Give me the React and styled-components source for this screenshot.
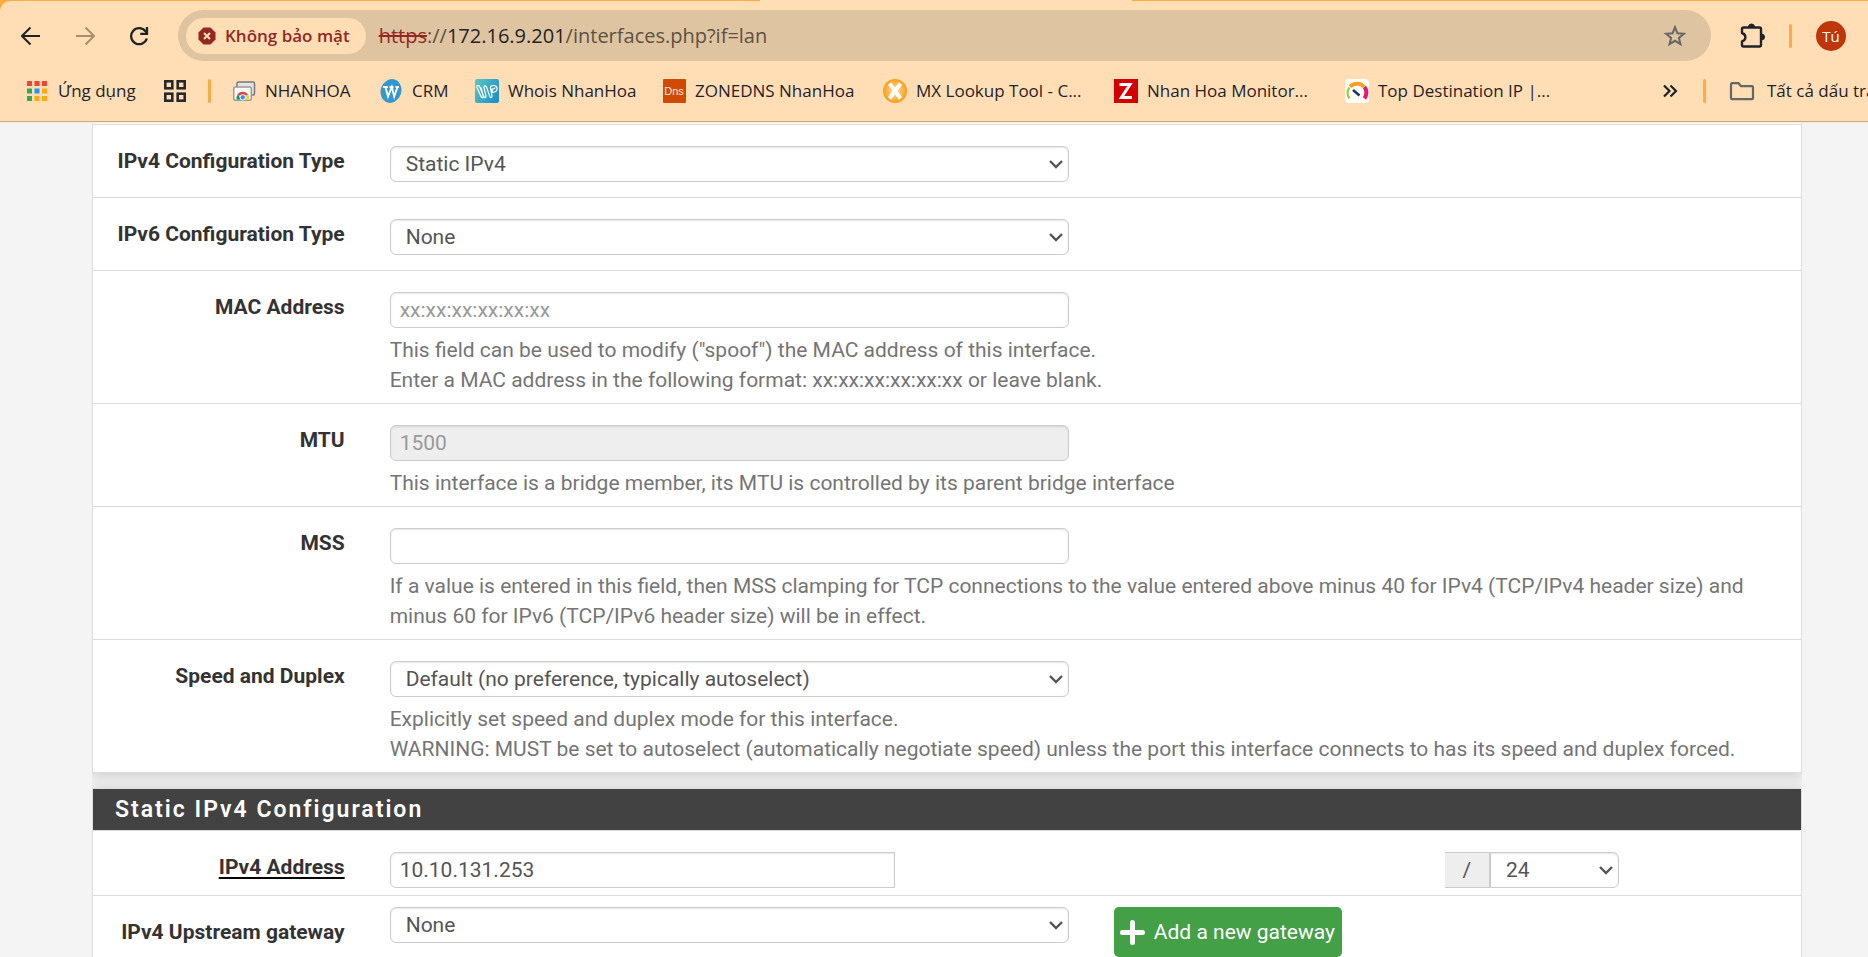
import React from "react";
import styled, { createGlobalStyle } from "styled-components";

const GlobalStyle = createGlobalStyle`
  * { box-sizing: border-box; }
  body {
    margin: 0;
    background: #f4f4f4;
    font-family: Roboto, "Liberation Sans", sans-serif;
    font-size: 21px;
    line-height: 30px;
    color: #333;
  }
`;

const Window = styled.div`
  display: flex;
  flex-direction: column;
  height: 100vh;
  overflow: hidden;
`;

/* ---------- browser frame ---------- */

const BrowserFrame = styled.header`
  flex: none;
  background: #ffab40;
  border-bottom: 1px solid #ffe8cc;
  font-family: "Open Sans", "Noto Sans", sans-serif;
  color: #1f2328;
`;

const TabStrip = styled.div`
  display: grid;
  grid-template-columns: 760fr 372fr 736fr;
  height: 1px;
`;

const ActiveTab = styled.div`
  grid-column: 2;
  height: 1px;
  background: #ffdeb6;
`;

const FrameBody = styled.div`
  height: 121px;
  background: #ffdeb6;
  border-top-left-radius: 10px;
  border-bottom: 1px solid #ccae8b;
`;

const Toolbar = styled.div`
  display: flex;
  align-items: center;
  height: 69px;
  padding: 0 22px 0 18px;
`;

const IconButton = styled.button`
  display: flex;
  align-items: center;
  justify-content: center;
  flex: none;
  width: 26px;
  height: 26px;
  padding: 0;
  border: 0;
  background: none;
  color: ${(p) => (p.disabled ? "#a8906f" : "#1f2328")};
`;

const NavButtons = styled.nav`
  display: flex;
  gap: 28px;
  margin-right: 26px;
`;

const Omnibox = styled.div`
  display: flex;
  align-items: center;
  flex: 1;
  height: 51px;
  padding: 0 23px 0 8px;
  border-radius: 26px;
  background: #dfc4a1;
`;

const SecurityChip = styled.button`
  display: flex;
  align-items: center;
  gap: 9px;
  height: 36px;
  padding: 0 16px 0 12px;
  border: 0;
  border-radius: 18px;
  background: #ffdeb6;
  color: #942822;
  font: 600 17px "Open Sans", "Noto Sans", sans-serif;
  white-space: nowrap;
`;

const Address = styled.div`
  flex: 1;
  margin-left: 13px;
  font-size: 20px;
  white-space: nowrap;
  color: #5d5143;

  s { color: #942822; }
  b { font-weight: 400; color: #1f2328; }
`;

const FrameDivider = styled.span`
  flex: none;
  width: 3px;
  height: 24px;
  border-radius: 2px;
  background: #ffab40;
`;

const ToolbarEnd = styled.div`
  display: flex;
  align-items: center;
  gap: 24px;
  margin-left: 28px;
`;

const Avatar = styled.button`
  width: 30px;
  height: 30px;
  padding: 0;
  border: 0;
  border-radius: 50%;
  background: #bf360c;
  color: #fff;
  font: 400 15px "Open Sans", "Noto Sans", sans-serif;
`;

const BookmarkBar = styled.nav`
  display: flex;
  align-items: center;
  height: 42px;
  padding-left: 25px;
  overflow: hidden;
`;

const Bookmark = styled.a`
  display: flex;
  align-items: center;
  flex: none;
  gap: 9px;
  width: ${(p) => p.$width}px;
  color: inherit;
  font-size: 17px;
  text-decoration: none;
  white-space: nowrap;
`;

const BookmarkGroup = styled.div`
  display: flex;
  align-items: center;
  flex: 1;
`;

const BookmarkEnd = styled.div`
  display: flex;
  align-items: center;
  flex: none;
  width: 211px;
  gap: 20px;
`;

const FolderLink = styled(Bookmark)`
  gap: 12px;
  padding-left: 3px;
`;

/* ---------- settings page ---------- */

const Main = styled.main`
  flex: 1;
  min-height: 0;
  margin: 0 66px 0 92px;
  overflow: hidden;
  background: #f0f0f0;
`;

const Panel = styled.section`
  margin-bottom: 15px;
  padding-top: ${(p) => (p.$continued ? 1 : 0)}px;
  border: 1px solid #ddd;
  border-top-width: ${(p) => (p.$continued ? 0 : 1)}px;
  background: #fff;
  box-shadow: 0 2px 12px rgba(0, 0, 0, 0.16);
`;

const PanelTitle = styled.h2`
  margin: 0;
  padding: 0 22px;
  background: #424242;
  color: #fff;
  font-size: 23px;
  font-weight: 600;
  line-height: 41px;
  letter-spacing: 2px;
`;

const FormRow = styled.div`
  border-top: 1px solid #ddd;
`;

const Columns = styled.div`
  display: grid;
  grid-template-columns: repeat(12, minmax(0, 1fr));
  margin: 0 -15px;
  padding-bottom: ${(p) => (p.$compact ? 0 : 8)}px;
`;

const LabelCell = styled.div`
  grid-column: span 2;
  padding: 21px 23px 0 0;
  text-align: right;
  white-space: nowrap;
`;

const Label = styled.label`
  font-weight: 700;
  color: #333;
  text-decoration: ${(p) => (p.$required ? "underline #000 2px" : "none")};
  text-underline-offset: 3px;
`;

const FieldCell = styled.div`
  grid-column: span ${(p) => p.$span || 5};
  padding: ${(p) => (p.$tight ? 11 : 21)}px 23px 7px 22px;
`;

const HelpCell = styled.p`
  grid-column: 3 / span 10;
  margin: 0;
  padding: 0 22px;
  color: #757575;
`;

const TextInput = styled.input`
  display: block;
  width: 100%;
  height: 36px;
  padding: 0 9px;
  border: 1px solid #ccc;
  border-radius: ${(p) => (p.$joined ? "6px 0 0 6px" : "6px")};
  background: #fff;
  box-shadow: inset 0 1px 2px rgba(0, 0, 0, 0.1);
  color: #555;
  font: 400 21px Roboto, "Liberation Sans", sans-serif;

  &::placeholder { color: #999; opacity: 1; }
  &:disabled { background: #eee; color: #999; }
`;

const SelectBox = styled.div`
  position: relative;

  svg {
    position: absolute;
    right: 6px;
    top: 14px;
    pointer-events: none;
  }
`;

const SelectInput = styled.select`
  display: block;
  appearance: none;
  width: 100%;
  height: 36px;
  padding: 0 15px;
  border: 1px solid #ccc;
  border-radius: ${(p) => (p.$joined ? "0 6px 6px 0" : "6px")};
  background: #fff;
  box-shadow: inset 0 1px 2px rgba(0, 0, 0, 0.1);
  color: #555;
  font: 400 21px Roboto, "Liberation Sans", sans-serif;
`;

const AddressGroup = styled.div`
  display: grid;
  grid-template-columns: 505fr 550fr 45px 129px 174fr;
`;

const Addon = styled.span`
  grid-column: 3;
  height: 36px;
  border: 1px solid #ccc;
  border-left: 0;
  background: #eee;
  color: #555;
  line-height: 34px;
  text-align: center;
`;

const AddButton = styled.button`
  display: flex;
  align-items: center;
  gap: 9px;
  height: 50px;
  padding: 0 7px 0 6px;
  border: 0;
  border-radius: 5px;
  background: #43a047;
  color: #fff;
  font: 400 21px Roboto, "Liberation Sans", sans-serif;
  white-space: nowrap;
`;

/* ---------- icons ---------- */

const Chevron = () => (
  <svg width="14" height="9" viewBox="0 0 14 9" fill="none" stroke="#555" strokeWidth="2.4">
    <path d="M1 1l6 6 6-6" />
  </svg>
);

const ArrowIcon = ({ flip }) => (
  <svg width="20" height="20" viewBox="0 0 20 20" fill="none" stroke="currentColor" strokeWidth="2">
    <path d={flip ? "M1 10h17M10.500 1.500l8.500 8.500-8.500 8.500" : "M19 10H2M9.500 1.500L1 10l8.500 8.500"} />
  </svg>
);

const ReloadIcon = () => (
  <svg width="20" height="20" viewBox="0 0 20 20" fill="none" stroke="currentColor" strokeWidth="2.300">
    <path d="M17.800 12.500A8 8 0 1 1 16.500 5.300L18 7" />
    <path d="M18 1v6.800h-6.800" />
  </svg>
);

const DangerIcon = () => (
  <svg width="18" height="18" viewBox="0 0 18 18">
    <path d="M5.500 0.500h7l5 5v7l-5 5h-7l-5-5v-7z" fill="#942822" />
    <path d="M6 6l6 6M12 6l-6 6" stroke="#ffdeb6" strokeWidth="2" />
  </svg>
);

const StarIcon = () => (
  <svg width="24" height="24" viewBox="0 0 24 24" fill="none" stroke="#676767" strokeWidth="2">
    <path d="M12 3.200l2.400 6 6.500.5-5 4.200 1.600 6.300L12 16.800l-5.500 3.400 1.600-6.300-5-4.200 6.500-.5z" />
  </svg>
);

const PuzzleIcon = () => (
  <svg width="26" height="26" viewBox="0 0 26 26">
    <path
      d="M4.500 4.500h16a1.500 1.500 0 0 1 1.500 1.500v16a1.500 1.500 0 0 1-1.500 1.500h-16a1.500 1.500 0 0 1-1.500-1.500v-3.500c4.500-1.500 4.500-7 0-8.500V6a1.500 1.500 0 0 1 1.500-1.500z"
      fill="none" stroke="#1f2328" strokeWidth="2.400" strokeLinejoin="round"
    />
    <path d="M9.500 4a3 3 0 0 1 6 0zM22.500 11a3 3 0 0 1 0 6z" fill="#1f2328" stroke="#1f2328" />
  </svg>
);

const appColours = ["#f44336", "#f44336", "#f44336", "#34a853", "#2196f3", "#ffa90a", "#34a853", "#ffa90a", "#ffa90a"];

const AppsIcon = () => (
  <svg width="24" height="24" viewBox="0 0 24 24">
    {appColours.map((colour, i) => (
      <rect key={i} x={2 + (i % 3) * 7.500} y={2 + Math.floor(i / 3) * 7.500} width="5" height="5" fill={colour} />
    ))}
  </svg>
);

const GridIcon = () => (
  <svg width="24" height="24" viewBox="0 0 24 24" fill="none" stroke="#26282b" strokeWidth="2.600">
    <rect x="2.300" y="2.300" width="7" height="7" />
    <rect x="14.700" y="2.300" width="7" height="7" />
    <rect x="2.300" y="14.700" width="7" height="7" />
    <rect x="14.700" y="14.700" width="7" height="7" />
  </svg>
);

const WindowsIcon = () => (
  <svg width="24" height="24" viewBox="0 0 24 24">
    <rect x="5" y="3" width="17.500" height="13" rx="1.500" fill="#e4e4e4" stroke="#777" strokeWidth="1.500" />
    <rect x="1.800" y="8" width="17.500" height="13.200" rx="1.500" fill="#fff" stroke="#999" strokeWidth="1.500" />
    <path d="M4.500 20.500a6.200 6.200 0 0 1 1.200-5l4.300 5z" fill="#0f9d58" />
    <path d="M5.200 16a6.200 6.200 0 0 1 11 0l-5.500 1.500z" fill="#db4437" />
    <path d="M11 20.500l1-4.500h4.500a6.200 6.200 0 0 1 .5 4.500z" fill="#ffcd40" />
    <circle cx="10.700" cy="18.300" r="2.700" fill="#4285f4" stroke="#fff" />
  </svg>
);

const CrmIcon = () => (
  <svg width="24" height="24" viewBox="0 0 24 24">
    <ellipse cx="12" cy="12" rx="10.300" ry="12" transform="rotate(18 12 12)" fill="#3398d0" />
    <path
      d="M4 8h5M10.500 8h4M16.500 8h3.500M6.500 8l2.500 9.500L12.800 8l2.400 9.500L18.500 8"
      fill="none" stroke="#fff" strokeWidth="1.900"
    />
  </svg>
);

const WhoisIcon = () => (
  <svg width="24" height="24" viewBox="0 0 24 24">
    <defs>
      <linearGradient id="whois" x1="0" y1="0" x2="1" y2="0.600">
        <stop offset="0" stopColor="#5cc8c0" />
        <stop offset="1" stopColor="#1f93cc" />
      </linearGradient>
    </defs>
    <rect width="24" height="24" rx="2" fill="url(#whois)" />
    <path
      d="M1.500 7.500l4.500 10c.8 1.800 2.600 1.300 2.200-.5L6 8.500M1.500 7.500C2 6 4 6 4.600 7.500l4.200 10c.8 1.800 2.600 1.300 2.200-.5L9 8.500c-.3-2 1.800-2.200 2.500-.5l3.300 9.500c.8 1.800 2.500 1 2.200-.8L15.500 9c-.3-1.800 1-2.500 3-2.500 5 0 5 6.500-1 7l-.5-3.500c1.500 0 3-.3 3-1.500"
      fill="none" stroke="#fff" strokeWidth="1.200"
    />
  </svg>
);

const TileText = styled.text`
  fill: #ffe9dd;
  font-family: "Liberation Sans", sans-serif;
  font-size: 11px;
  text-anchor: middle;
`;

const DnsIcon = () => (
  <svg width="24" height="24" viewBox="0 0 24 24">
    <rect x="1" width="23" height="24" rx="1" fill="#d04a02" />
    <TileText x="12" y="16">Dns</TileText>
  </svg>
);

const MxIcon = () => (
  <svg width="24" height="24" viewBox="0 0 24 24">
    <defs>
      <radialGradient id="mx">
        <stop offset="0" stopColor="#ffe0a8" />
        <stop offset="1" stopColor="#fb9d14" />
      </radialGradient>
    </defs>
    <circle cx="12" cy="12" r="12" fill="url(#mx)" />
    <path d="M6.500 4.500l11 15M17.500 4.500l-11 15" stroke="#fff" strokeWidth="4" />
  </svg>
);

const ZabbixIcon = () => (
  <svg width="24" height="24" viewBox="0 0 24 24">
    <rect width="24" height="24" fill="#d40000" />
    <path d="M5.500 5.500h10.500L7.500 18.500h10.500" fill="none" stroke="#fff" strokeWidth="3" />
  </svg>
);

const GaugeIcon = () => (
  <svg width="24" height="24" viewBox="0 0 24 24" fill="none">
    <rect width="24" height="24" rx="4" fill="#fff" />
    <path d="M4.500 19.500C2 16 2 11.500 4.500 8.500" stroke="#a4d037" strokeWidth="2.400" />
    <path d="M5 7.800c4-4.500 11-4 14 .2" stroke="#ff9d1c" strokeWidth="3.600" />
    <path d="M19.500 8c2.500 3 2.500 8 0 11.500" stroke="#f5106e" strokeWidth="4" />
    <path d="M8 11l6.500 5.500" stroke="#1d3a5f" strokeWidth="2.600" />
  </svg>
);

const MoreIcon = () => (
  <svg width="16" height="14" viewBox="0 0 16 14" fill="none" stroke="#1f2328" strokeWidth="2.200">
    <path d="M2 1.500L7.500 7 2 12.500M8.500 1.500L14 7l-5.500 5.500" />
  </svg>
);

const FolderIcon = () => (
  <svg width="26" height="20" viewBox="0 0 26 20" fill="none" stroke="#666" strokeWidth="2.200">
    <path d="M3 2.200h6.500l2.500 3h11a1 1 0 0 1 1 1v11a1 1 0 0 1-1 1H3a1 1 0 0 1-1-1v-14a1 1 0 0 1 1-1z" />
  </svg>
);

const PlusIcon = () => (
  <svg width="25" height="25" viewBox="0 0 25 25">
    <path d="M12.500 2.500v20M2.500 12.500h20" stroke="#fff" strokeWidth="5" strokeLinecap="round" />
  </svg>
);

/* ---------- composition ---------- */

const bookmarks = [
  { title: "NHANHOA", icon: <WindowsIcon />, width: 147 },
  { title: "CRM", icon: <CrmIcon />, width: 96 },
  { title: "Whois NhanHoa", icon: <WhoisIcon />, width: 187 },
  { title: "ZONEDNS NhanHoa", icon: <DnsIcon />, width: 221 },
  { title: "MX Lookup Tool - C...", icon: <MxIcon />, width: 231 },
  { title: "Nhan Hoa Monitor...", icon: <ZabbixIcon />, width: 231 },
  { title: "Top Destination IP |...", icon: <GaugeIcon />, width: 220 },
];

function Browser() {
  return (
    <BrowserFrame>
      <TabStrip><ActiveTab /></TabStrip>
      <FrameBody>
        <Toolbar>
          <NavButtons>
            <IconButton aria-label="Back"><ArrowIcon /></IconButton>
            <IconButton aria-label="Forward" disabled><ArrowIcon flip /></IconButton>
            <IconButton aria-label="Reload"><ReloadIcon /></IconButton>
          </NavButtons>
          <Omnibox>
            <SecurityChip><DangerIcon />Không bảo mật</SecurityChip>
            <Address><s>https</s>://<b>172.16.9.201</b>/interfaces.php?if=lan</Address>
            <IconButton aria-label="Bookmark this page"><StarIcon /></IconButton>
          </Omnibox>
          <ToolbarEnd>
            <IconButton aria-label="Extensions"><PuzzleIcon /></IconButton>
            <FrameDivider />
            <Avatar>Tú</Avatar>
          </ToolbarEnd>
        </Toolbar>
        <BookmarkBar>
          <BookmarkGroup>
            <Bookmark href="#" $width={138}><AppsIcon />Ứng dụng</Bookmark>
            <Bookmark href="#" $width={45} aria-label="Tab groups"><GridIcon /></Bookmark>
            <Bookmark as="span" $width={24}><FrameDivider /></Bookmark>
            {bookmarks.map((b) => (
              <Bookmark key={b.title} href="#" $width={b.width}>{b.icon}{b.title}</Bookmark>
            ))}
          </BookmarkGroup>
          <BookmarkEnd>
            <IconButton aria-label="More bookmarks"><MoreIcon /></IconButton>
            <FrameDivider />
            <FolderLink href="#" $width={220}><FolderIcon />Tất cả dấu trang</FolderLink>
          </BookmarkEnd>
        </BookmarkBar>
      </FrameBody>
    </BrowserFrame>
  );
}

function Select({ id, value, joined, label }) {
  return (
    <SelectBox>
      <SelectInput id={id} $joined={joined} aria-label={label} defaultValue={value}>
        <option>{value}</option>
      </SelectInput>
      <Chevron />
    </SelectBox>
  );
}

function Field({ id, label, help, children }) {
  return (
    <FormRow>
      <Columns>
        <LabelCell><Label htmlFor={id}>{label}</Label></LabelCell>
        <FieldCell>{children}</FieldCell>
        {help && <HelpCell>{help}</HelpCell>}
      </Columns>
    </FormRow>
  );
}

export default function App() {
  return (
    <Window>
      <GlobalStyle />
      <Browser />
      <Main>
        <Panel $continued>
          <Field id="type4" label="IPv4 Configuration Type">
            <Select id="type4" value="Static IPv4" />
          </Field>
          <Field id="type6" label="IPv6 Configuration Type">
            <Select id="type6" value="None" />
          </Field>
          <Field
            id="mac"
            label="MAC Address"
            help={<>This field can be used to modify ("spoof") the MAC address of this interface.<br />Enter a MAC address in the following format: xx:xx:xx:xx:xx:xx or leave blank.</>}
          >
            <TextInput id="mac" placeholder="xx:xx:xx:xx:xx:xx" />
          </Field>
          <Field
            id="mtu"
            label="MTU"
            help="This interface is a bridge member, its MTU is controlled by its parent bridge interface"
          >
            <TextInput id="mtu" placeholder="1500" disabled />
          </Field>
          <Field
            id="mss"
            label="MSS"
            help="If a value is entered in this field, then MSS clamping for TCP connections to the value entered above minus 40 for IPv4 (TCP/IPv4 header size) and minus 60 for IPv6 (TCP/IPv6 header size) will be in effect."
          >
            <TextInput id="mss" />
          </Field>
          <Field
            id="media"
            label="Speed and Duplex"
            help={<>Explicitly set speed and duplex mode for this interface.<br />WARNING: MUST be set to autoselect (automatically negotiate speed) unless the port this interface connects to has its speed and duplex forced.</>}
          >
            <Select id="media" value="Default (no preference, typically autoselect)" />
          </Field>
        </Panel>

        <Panel>
          <PanelTitle>Static IPv4 Configuration</PanelTitle>
          <FormRow>
            <Columns $compact>
              <LabelCell><Label htmlFor="ipaddr" $required>IPv4 Address</Label></LabelCell>
              <FieldCell $span={10}>
                <AddressGroup>
                  <TextInput id="ipaddr" $joined defaultValue="10.10.131.253" />
                  <Addon>/</Addon>
                  <Select id="subnet" label="Subnet mask" joined value="24" />
                </AddressGroup>
              </FieldCell>
            </Columns>
          </FormRow>
          <FormRow>
            <Columns $compact>
              <LabelCell><Label htmlFor="gateway">IPv4 Upstream gateway</Label></LabelCell>
              <FieldCell $tight>
                <Select id="gateway" value="None" />
              </FieldCell>
              <FieldCell $tight>
                <AddButton><PlusIcon />Add a new gateway</AddButton>
              </FieldCell>
            </Columns>
          </FormRow>
        </Panel>
      </Main>
    </Window>
  );
}
